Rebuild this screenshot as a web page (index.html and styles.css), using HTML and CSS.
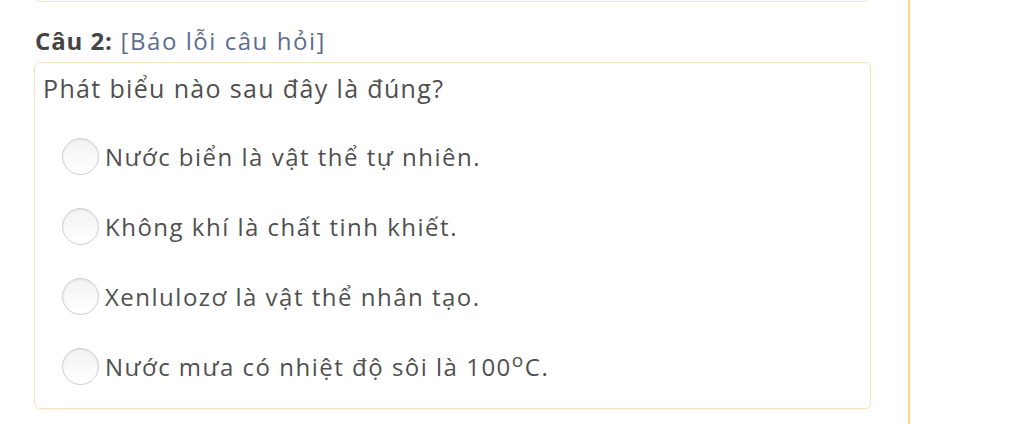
FILE: index.html
```html
<!DOCTYPE html>
<html lang="vi">
<head>
<meta charset="utf-8">
<link rel="stylesheet" href="styles.css">
</head>
<body>
<div class="layout">
  <div class="main">
    <div class="prev-card"></div>
    <div class="q-title"><b>Câu 2:</b> <span class="report">[Báo lỗi câu hỏi]</span></div>
    <div class="q-card">
      <div class="q-text">Phát biểu nào sau đây là đúng?</div>
      <div class="options">
        <label class="option"><span class="radio"></span><span class="opt-text">Nước biển là vật thể tự nhiên.</span></label>
        <label class="option"><span class="radio"></span><span class="opt-text">Không khí là chất tinh khiết.</span></label>
        <label class="option"><span class="radio"></span><span class="opt-text">Xenlulozơ là vật thể nhân tạo.</span></label>
        <label class="option"><span class="radio"></span><span class="opt-text">Nước mưa có nhiệt độ sôi là 100<sup>o</sup>C.</span></label>
      </div>
    </div>
  </div>
  <div class="side-line"></div>
</div>
</body>
</html>
```
FILE: styles.css
```css
html, body {
  margin: 0;
  padding: 0;
  background: #ffffff;
}
body {
  font-family: "Open Sans", Lato, sans-serif;
  color: #555555;
  overflow: hidden;
  height: 424px;
}
.layout {
  display: flex;
  height: 424px;
}
.main {
  width: 837px;
  margin-left: 34px;
  display: flex;
  flex-direction: column;
}
.prev-card {
  height: 10px;
  margin-top: -9px;
  margin-right: 3px;
  border: 1px solid #f4e7cb;
  border-top: none;
  border-radius: 0 0 6px 6px;
}
.q-title {
  margin-top: 25px;
  margin-left: 1px;
  font-size: 24px;
  line-height: 28px;
  letter-spacing: 1.55px;
  color: #4a4a4a;
}
.q-title b {
  font-weight: 700;
  letter-spacing: 0.9px;
  color: #444444;
}
.report {
  color: #5d6d8e;
}
.q-card {
  margin-top: 7px;
  border: 1px solid #f4e4c4;
  border-radius: 6px;
  padding: 10px 8px 7px 8px;
  box-shadow: 0 1px 2px rgba(240, 220, 170, 0.35);
}
.q-text {
  font-size: 25px;
  line-height: 30px;
  letter-spacing: 1.35px;
  color: #505050;
}
.options {
  margin-top: 18px;
  padding-left: 19px;
  display: flex;
  flex-direction: column;
}
.option {
  display: flex;
  align-items: center;
  height: 70px;
}
.radio {
  width: 35px;
  height: 35px;
  border-radius: 50%;
  border: 1px solid #cfcfcf;
  background: linear-gradient(#f3f3f3, #ffffff);
  box-shadow: inset 0 1px 2px rgba(0, 0, 0, 0.08);
  flex: none;
}
.opt-text {
  margin-left: 6px;
  font-size: 24px;
  letter-spacing: 1.5px;
  color: #505050;
}
.opt-text sup {
  font-size: 19px;
  line-height: 0;
  vertical-align: 9px;
}
.side-line {
  width: 2px;
  margin-left: 37px;
  background: #f5dd8c;
}
```
